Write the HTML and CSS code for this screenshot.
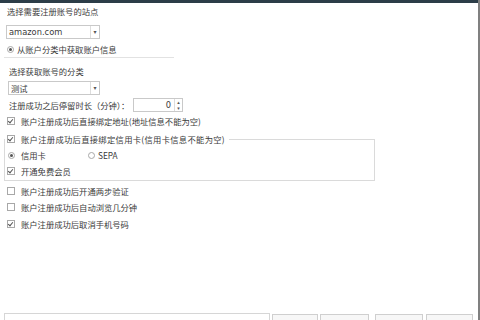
FILE: index.html
```html
<!DOCTYPE html>
<html lang="zh">
<head>
    <meta charset="UTF-8">
    <title>注册向导</title>
    <link rel="stylesheet" href="styles.css">
</head>
<body>
    <div class="topbar"></div>
    <div class="page">
        <div class="label site-label">选择需要注册账号的站点</div>
        <div class="combo site-combo">
            <span class="combo-text">amazon.com</span>
            <span class="combo-arrow">▾</span>
        </div>
        <div class="row radio-row">
            <span class="radio checked"></span>
            <span>从账户分类中获取账户信息</span>
        </div>
        <div class="divider"></div>
        <div class="label cat-label">选择获取账号的分类</div>
        <div class="combo cat-combo">
            <span class="combo-text">测试</span>
            <span class="combo-arrow">▾</span>
        </div>
        <div class="row spin-row">
            <span class="spin-label">注册成功之后停留时长（分钟）：</span>
            <div class="spin">
                <span class="spin-value">0</span>
                <span class="spin-arrows"><i>▴</i><i>▾</i></span>
            </div>
        </div>
        <div class="row check-row first">
            <span class="check checked"></span>
            <span>账户注册成功后直接绑定地址(地址信息不能为空)</span>
        </div>
        <fieldset class="card-group">
            <legend class="row">
                <span class="check checked"></span>
                <span>账户注册成功后直接绑定信用卡(信用卡信息不能为空)</span>
            </legend>
            <div class="row card-type">
                <span class="radio checked"></span>
                <span class="card-name">信用卡</span>
                <span class="radio"></span>
                <span class="sepa">SEPA</span>
            </div>
            <div class="row member-row">
                <span class="check checked"></span>
                <span>开通免费会员</span>
            </div>
        </fieldset>
        <div class="row check-row after-group">
            <span class="check"></span>
            <span>账户注册成功后开通两步验证</span>
        </div>
        <div class="row check-row">
            <span class="check"></span>
            <span>账户注册成功后自动浏览几分钟</span>
        </div>
        <div class="row check-row last">
            <span class="check checked"></span>
            <span>账户注册成功后取消手机号码</span>
        </div>
    </div>
    <div class="footer">
        <div class="status-box"></div>
        <button class="btn btn-back">上一步</button>
        <button class="btn btn-next" disabled>下一步</button>
        <button class="btn btn-finish">完成</button>
        <button class="btn btn-cancel">取消</button>
    </div>
</body>
</html>
```

FILE: styles.css
```css
html, body {
    margin: 0;
    padding: 0;
    width: 480px;
    height: 320px;
    overflow: hidden;
}

body {
    position: relative;
    background-color: #ffffff;
    color: #3a3a3a;
    font-family: "Noto Sans CJK SC", "DejaVu Sans", sans-serif;
    font-size: 8.3px;
    line-height: 12px;
    border-right: 2px solid #808080;
    box-sizing: border-box;
}

.topbar {
    height: 3px;
    background-color: #2c3d48;
}

.page {
    display: flex;
    flex-direction: column;
    align-items: flex-start;
}

.row {
    display: flex;
    align-items: center;
    height: 12px;
}

.label {
    height: 12px;
}

.site-label {
    margin: 2px 0 0 7px;
}

.cat-label {
    margin: 7px 0 0 9px;
}

.combo {
    display: flex;
    align-items: center;
    height: 14px;
    box-sizing: border-box;
    border: 1px solid #c9c9c9;
    background-color: #ffffff;
}

.combo-text {
    flex: 1;
    padding-left: 2px;
    font-family: "DejaVu Sans", "Noto Sans CJK SC", sans-serif;
}

.cat-combo .combo-text {
    font-family: "Noto Sans CJK SC", sans-serif;
}

.combo-arrow {
    width: 8px;
    height: 12px;
    border-left: 1px solid #dddddd;
    font-size: 6px;
    line-height: 12px;
    text-align: center;
    color: #555555;
}

.site-combo {
    width: 94px;
    margin: 8px 0 0 6px;
}

.cat-combo {
    width: 92px;
    margin: 4px 0 0 8px;
}

.radio {
    width: 5px;
    height: 5px;
    border: 1px solid #a8a8a8;
    border-radius: 50%;
    box-sizing: content-box;
    position: relative;
    flex: none;
}

.radio.checked::after {
    content: "";
    position: absolute;
    left: 1px;
    top: 1px;
    width: 3px;
    height: 3px;
    border-radius: 50%;
    background-color: #555555;
}

.radio-row {
    margin: 4px 0 0 7px;
}

.radio-row .radio {
    margin-right: 3px;
}

.divider {
    width: 170px;
    height: 0;
    margin: 2px 0 0 4px;
    border-top: 1px solid #e2e2e2;
}

.spin-row {
    height: 14px;
    margin: 3px 0 0 9px;
}

.spin-label {
    width: 124px;
}

.spin {
    display: flex;
    align-items: center;
    width: 50px;
    height: 14px;
    box-sizing: border-box;
    border: 1px solid #c9c9c9;
}

.spin-value {
    flex: 1;
    text-align: right;
    padding-right: 3px;
    font-family: "DejaVu Sans", sans-serif;
}

.spin-arrows {
    display: flex;
    flex-direction: column;
    width: 7px;
    height: 12px;
    border-left: 1px solid #dddddd;
}

.spin-arrows i {
    font-style: normal;
    font-size: 5px;
    line-height: 6px;
    text-align: center;
    color: #555555;
}

.check {
    width: 6px;
    height: 6px;
    border: 1px solid #a8a8a8;
    margin-right: 6px;
    position: relative;
    flex: none;
}

.check.checked::after {
    content: "";
    position: absolute;
    left: 1px;
    top: 0;
    width: 2px;
    height: 4px;
    border-right: 1px solid #555555;
    border-bottom: 1px solid #555555;
    transform: rotate(40deg);
}

.check-row {
    margin: 4px 0 0 7px;
}

.check-row.first {
    margin-top: 3px;
}

.check-row.after-group {
    margin-top: 4px;
}

.check-row.last {
    margin-top: 5px;
}

.card-group {
    width: 371px;
    margin: 6px 0 0 4px;
    padding: 0 0 3px 0;
    box-sizing: border-box;
    border: 1px solid #dadada;
}

.card-group legend {
    padding: 0 4px 0 2px;
    margin: 0;
    letter-spacing: 0.3px;
}

.card-type {
    margin: 4px 0 0 3px;
}

.card-type .radio {
    margin-right: 6px;
}

.card-name {
    width: 67px;
}

.sepa {
    margin-left: -3px;
    line-height: 12px;
}

.member-row {
    margin: 4px 0 0 2px;
}

.footer {
    display: flex;
    align-items: flex-start;
    position: absolute;
    left: 0;
    top: 313px;
    width: 478px;
    padding-left: 4px;
    box-sizing: border-box;
}

.status-box {
    width: 266px;
    height: 20px;
    border: 1px solid #d6d6d6;
    box-sizing: border-box;
    margin-right: 2px;
}

.btn {
    height: 20px;
    margin: 1px 2px 0 0;
    padding: 0;
    border: 1px solid #cfcfcf;
    background-color: #f7f7f7;
    color: #333333;
    font-family: "Noto Sans CJK SC", sans-serif;
    font-size: 8.3px;
    line-height: 12px;
    padding-top: 2px;
    box-sizing: border-box;
    vertical-align: top;
}

.btn:disabled {
    color: #a5a5a5;
}

.btn-back {
    width: 46px;
}

.btn-next {
    width: 49px;
    margin-right: 6px;
}

.btn-finish {
    width: 48px;
    margin-right: 3px;
}

.btn-cancel {
    width: 47px;
}
```
